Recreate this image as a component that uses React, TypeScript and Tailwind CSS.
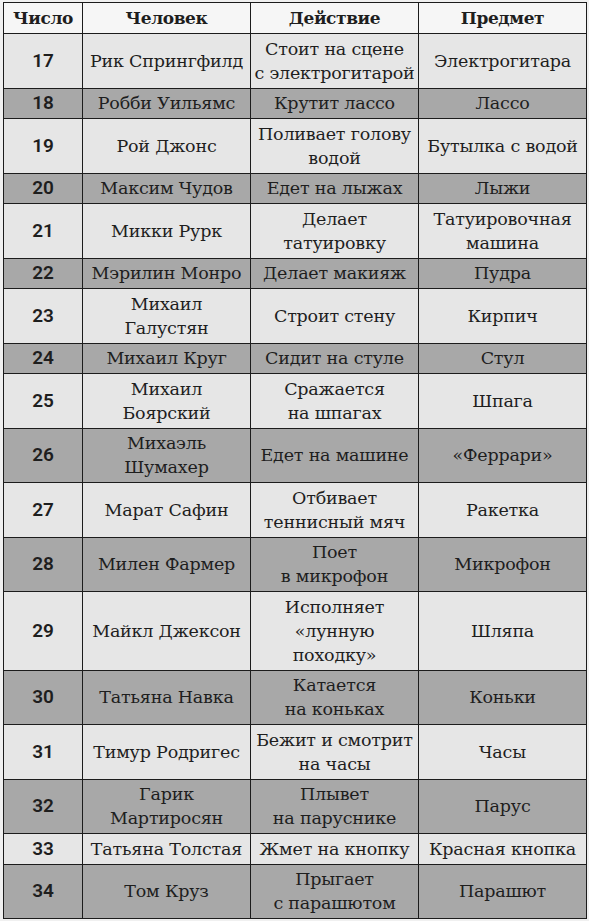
const rows: [string, string[], string[], string[]][] = [
  ['17', ['Рик Спрингфилд'], ['Стоит на сцене', 'с электрогитарой'], ['Электрогитара']],
  ['18', ['Робби Уильямс'], ['Крутит лассо'], ['Лассо']],
  ['19', ['Рой Джонс'], ['Поливает голову', 'водой'], ['Бутылка с водой']],
  ['20', ['Максим Чудов'], ['Едет на лыжах'], ['Лыжи']],
  ['21', ['Микки Рурк'], ['Делает', 'татуировку'], ['Татуировочная', 'машина']],
  ['22', ['Мэрилин Монро'], ['Делает макияж'], ['Пудра']],
  ['23', ['Михаил', 'Галустян'], ['Строит стену'], ['Кирпич']],
  ['24', ['Михаил Круг'], ['Сидит на стуле'], ['Стул']],
  ['25', ['Михаил', 'Боярский'], ['Сражается', 'на шпагах'], ['Шпага']],
  ['26', ['Михаэль', 'Шумахер'], ['Едет на машине'], ['«Феррари»']],
  ['27', ['Марат Сафин'], ['Отбивает', 'теннисный мяч'], ['Ракетка']],
  ['28', ['Милен Фармер'], ['Поет', 'в микрофон'], ['Микрофон']],
  ['29', ['Майкл Джексон'], ['Исполняет', '«лунную', 'походку»'], ['Шляпа']],
  ['30', ['Татьяна Навка'], ['Катается', 'на коньках'], ['Коньки']],
  ['31', ['Тимур Родригес'], ['Бежит и смотрит', 'на часы'], ['Часы']],
  ['32', ['Гарик', 'Мартиросян'], ['Плывет', 'на паруснике'], ['Парус']],
  ['33', ['Татьяна Толстая'], ['Жмет на кнопку'], ['Красная кнопка']],
  ['34', ['Том Круз'], ['Прыгает', 'с парашютом'], ['Парашют']],
];

function Lines({ lines }: { lines: string[] }) {
  return (
    <>
      {lines.map((l, i) => (
        <div key={i}>{l}</div>
      ))}
    </>
  );
}

const cell = "border border-[#1c1c1c] py-[2.75px] px-0 font-['DejaVu_Serif',serif] text-[17.5px] tracking-[-0.2px]";
const head = "border border-[#1c1c1c] p-0 font-['DejaVu_Serif',serif] text-[17px] tracking-[-0.4px] font-bold leading-[24px]";

export default function App() {
  return (
    <div className="w-[589px] h-[921px] bg-[#f0f0f0] pl-[3px] pt-[2px]">
      <table className="w-[583px] border-collapse border-[1.5px] border-[#1c1c1c] text-[#1e1e1e] text-center table-fixed">
        <colgroup>
          <col className="w-[79px]" />
          <col className="w-[168px]" />
          <col className="w-[168px]" />
          <col className="w-[168px]" />
        </colgroup>
        <thead>
          <tr className="bg-[#f6f6f6] h-[31px]">
            <th className={head}>Число</th>
            <th className={head}>Человек</th>
            <th className={head}>Действие</th>
            <th className={head}>Предмет</th>
          </tr>
        </thead>
        <tbody className="leading-[24px]">
          {rows.map(([n, person, action, item], i) => (
            <tr key={n} className={i % 2 === 0 ? 'bg-[#e6e6e6]' : 'bg-[#a8a8a8]'}>
              <td className="border border-[#1c1c1c] py-[2.75px] px-0 font-semibold text-[19px] font-['Roboto',sans-serif]">
                {n}
              </td>
              <td className={cell}>
                <Lines lines={person} />
              </td>
              <td className={cell}>
                <Lines lines={action} />
              </td>
              <td className={cell}>
                <Lines lines={item} />
              </td>
            </tr>
          ))}
        </tbody>
      </table>
    </div>
  );
}
